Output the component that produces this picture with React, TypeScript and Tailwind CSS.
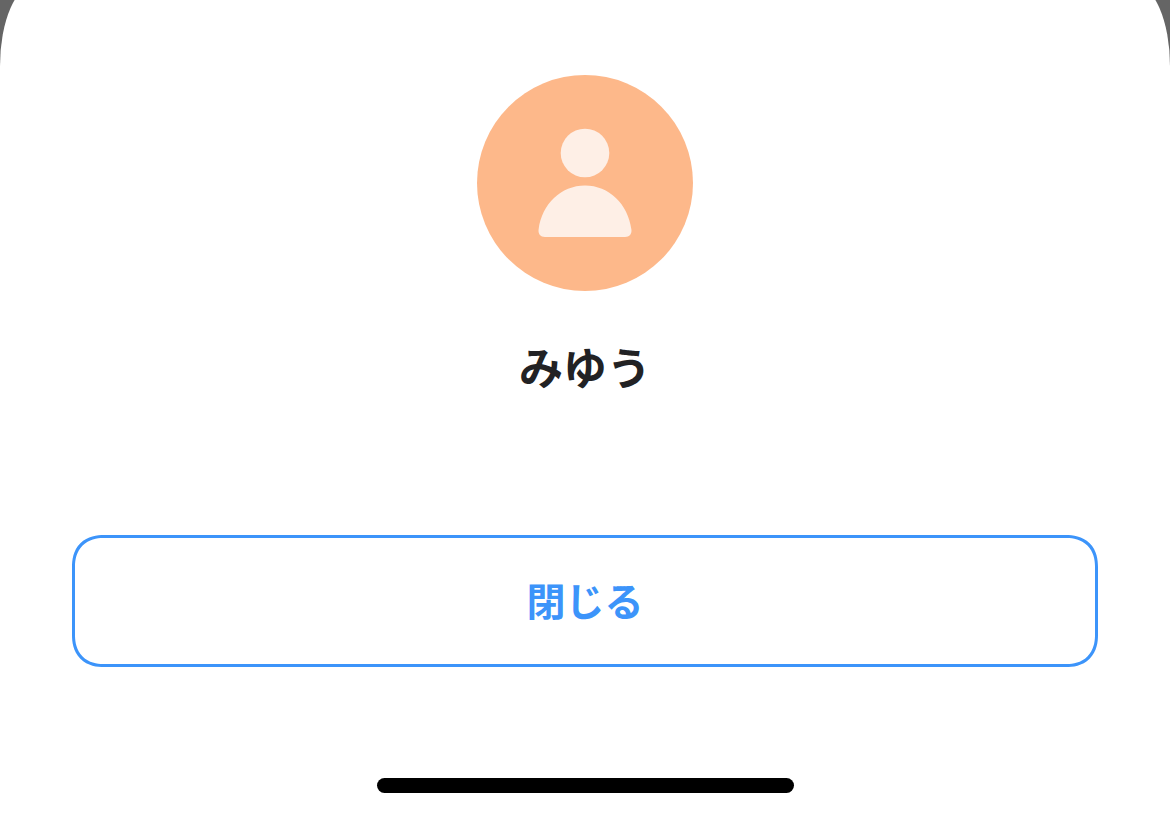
type Profile = {
  name: string;
};

const profile: Profile = { name: "みゆう" };

function Avatar() {
  return (
    <svg viewBox="0 0 216 216" className="size-[216px]" role="img" aria-label="プロフィール画像">
      <circle cx="108" cy="108" r="108" fill="#fdb88a" />
      <g fill="#feefe6">
        <circle cx="108" cy="78" r="24.3" />
        <path d="M108 110.5C84 110.5 65 129 61.6 154.500C61 159 63.500 162 68 162H148C152.500 162 155 159 154.400 154.500C151 129 132 110.500 108 110.500Z" />
      </g>
    </svg>
  );
}

// Bottom sheet: its top edge runs past the window, so only the lower part of
// the rounded corners shows.
export default function App() {
  return (
    <div className="flex min-h-screen flex-col overflow-hidden bg-[#656565] font-['Noto_Sans_CJK_JP',sans-serif]">
      <main className="-mt-4 flex grow flex-col items-center rounded-t-[36px_82px] bg-white px-[72px] pt-[91px] pb-6">
        <Avatar />
        <h1 className="mt-11 text-[44px] leading-[62px] font-bold text-[#222224]">
          {profile.name}
        </h1>
        <button
          type="button"
          className="mt-[138px] h-[132px] w-full rounded-[32px] border-3 border-[#3c94fa] pb-1 text-[39px] font-bold text-[#3c94fa] [corner-shape:superellipse(1.2)]"
        >
          閉じる
        </button>
        <div className="mt-auto h-[15px] w-[417px] rounded-full bg-black" />
      </main>
    </div>
  );
}
